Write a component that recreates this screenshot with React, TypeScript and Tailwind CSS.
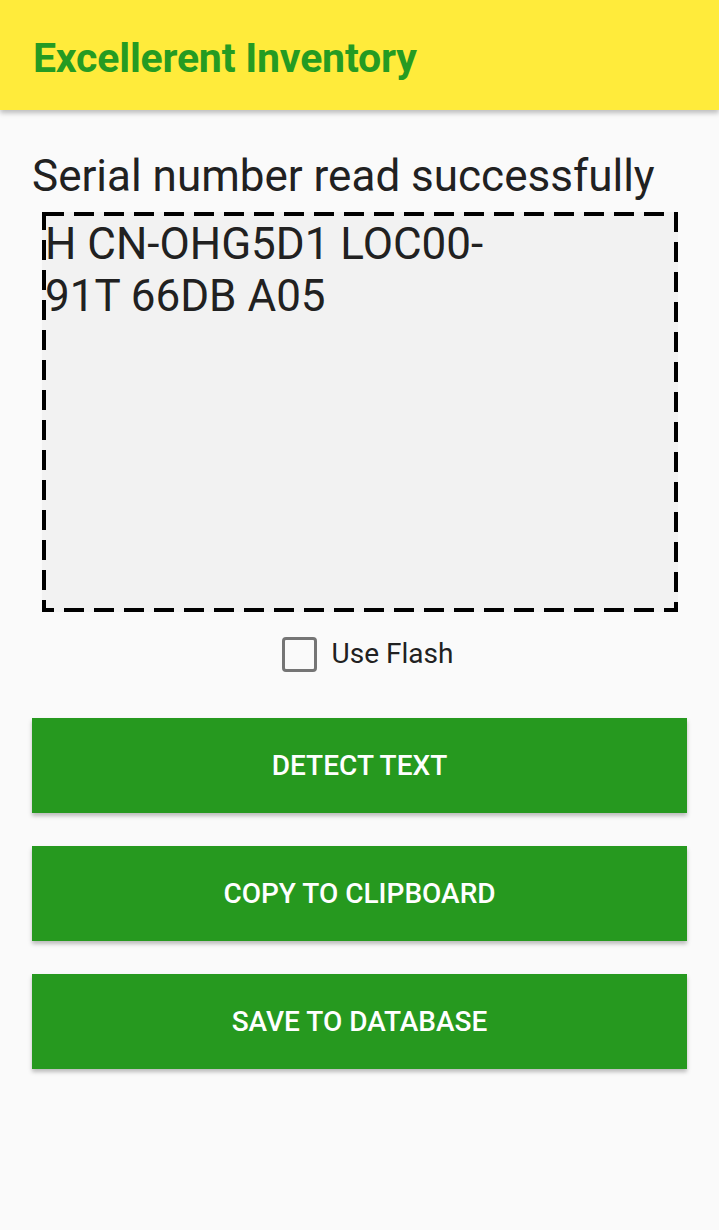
export default function App() {
  const buttons = ["Detect Text", "Copy to Clipboard", "Save to Database"];
  return (
    <div
      className="min-h-[1230px] bg-[#fafafa] flex flex-col"
      style={{ fontFamily: "Roboto, 'Liberation Sans', sans-serif" }}
    >
      <header className="h-[110px] bg-[#ffeb3b] flex items-start pt-[34px] px-[33px] shadow-[0_3px_5px_rgba(0,0,0,0.25)] relative z-10">
        <h1 className="text-[41px] leading-[48px] font-bold text-[#259b22] tracking-[-0.2px] whitespace-nowrap">
          Excellerent Inventory
        </h1>
      </header>

      <main className="flex flex-col px-[32px] pt-[40px]">
        <p className="text-[44px] leading-[52px] text-[#212121] whitespace-nowrap">
          Serial number read successfully
        </p>

        {/* scanned text area */}
        <div className="relative mt-[10px] ml-[10px] w-[636px] h-[400px] bg-[#f2f2f2] pl-[3px] pt-[6px]">
          <svg className="absolute inset-0 pointer-events-none" width="636" height="400">
            <rect
              x="2"
              y="2"
              width="632"
              height="396"
              fill="none"
              stroke="#000"
              strokeWidth="4"
              strokeDasharray="20 10"
            />
          </svg>
          <p className="text-[44px] leading-[52px] text-[#212121]">
            H CN-OHG5D1 LOC00-
            <br />
            91T 66DB A05
          </p>
        </div>

        <label className="mt-[24px] h-[36px] pl-[16px] flex items-center justify-center gap-[15px]">
          <span className="w-[35px] h-[35px] border-[3px] border-[#757575] rounded-[4px]" />
          <span className="text-[28px] text-[#212121]">Use Flash</span>
        </label>

        <div className="mt-[46px] flex flex-col gap-[33px]">
          {buttons.map((b) => (
            <button
              key={b}
              className="h-[95px] w-full bg-[#26991f] text-white text-[28px] font-medium uppercase shadow-[0_3px_4px_rgba(0,0,0,0.25)]"
            >
              {b}
            </button>
          ))}
        </div>
      </main>
    </div>
  );
}
